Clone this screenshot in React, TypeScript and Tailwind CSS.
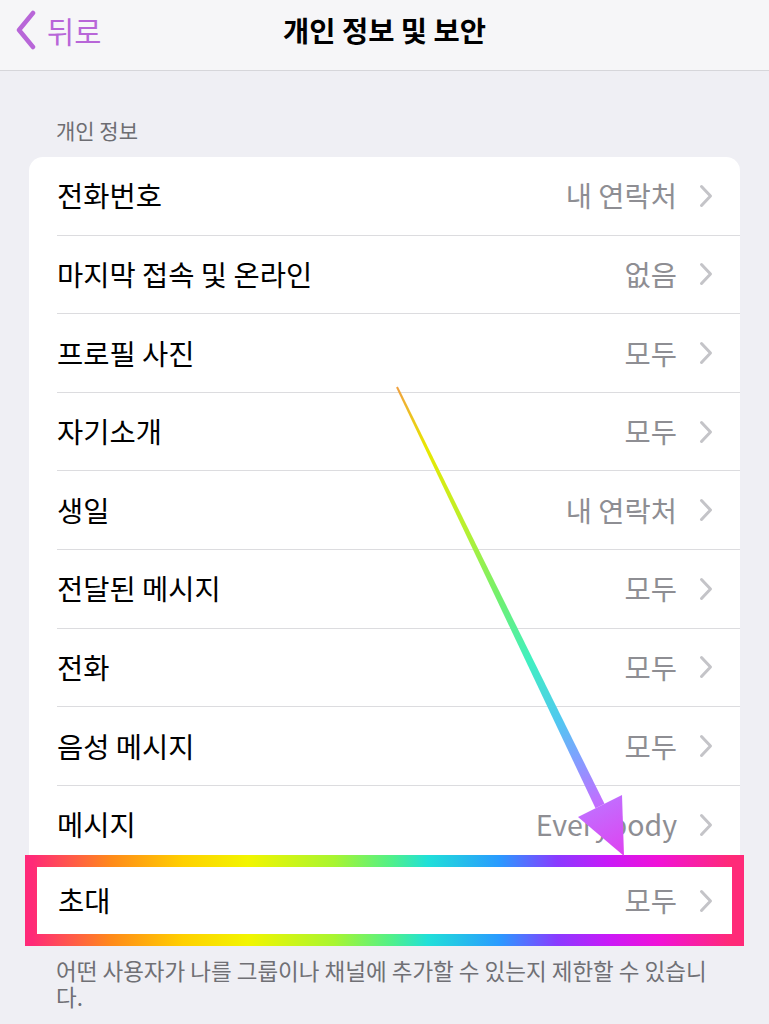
import React from 'react';

const ROWS: { label: string; value: string }[] = [
  { label: '전화번호', value: '내 연락처' },
  { label: '마지막 접속 및 온라인', value: '없음' },
  { label: '프로필 사진', value: '모두' },
  { label: '자기소개', value: '모두' },
  { label: '생일', value: '내 연락처' },
  { label: '전달된 메시지', value: '모두' },
  { label: '전화', value: '모두' },
  { label: '음성 메시지', value: '모두' },
  { label: '메시지', value: 'Everybody' },
];

const Chevron = () => (
  <svg width="14" height="24" viewBox="0 0 14 24" className="shrink-0">
    <path d="M2.5 2.5 L11.5 12 L2.5 21.5" fill="none" stroke="#c4c4c8" strokeWidth="3" strokeLinecap="round" strokeLinejoin="round" />
  </svg>
);

const Row = ({ label, value }: { label: string; value: string }) => (
  <div className="flex h-[78.6px] pl-[28px]">
    <div className="flex flex-1 items-center border-b border-[#dcdcdf] pr-[27px]">
      <span className="flex-1 text-[28.5px] text-black">{label}</span>
      <span className="mr-[22px] text-[28.5px] text-[#8e8e93]">{value}</span>
      <Chevron />
    </div>
  </div>
);

export default function App() {
  return (
    <div className="relative h-[1024px] w-full overflow-hidden bg-[#efeff4] font-['Noto_Sans_CJK_KR','Noto_Sans',sans-serif]">
      {/* nav bar */}
      <div className="h-[71px] border-b border-[#d6d6da] bg-[#f6f6f8]">
        <div className="grid h-[60px] grid-cols-[1fr_auto_1fr] items-center">
          <div className="flex items-center gap-[10px] pl-[13px] text-[#b866d8]">
            <svg width="24" height="40" viewBox="0 0 24 40">
              <path d="M20 3 L6 20 L20 37" fill="none" stroke="#b866d8" strokeWidth="4.5" strokeLinecap="round" strokeLinejoin="round" />
            </svg>
            <span className="text-[29.5px]">뒤로</span>
          </div>
          <h1 className="text-[28.5px] font-bold text-black">개인 정보 및 보안</h1>
          <div />
        </div>
      </div>

      <div className="pl-[56px] pt-[47px] text-[21px] leading-[24px] text-[#6d6d72]">개인 정보</div>

      <div className="mx-[29px] mt-[15px] rounded-[14px] bg-white">
        {ROWS.map((r) => (
          <Row key={r.label} label={r.label} value={r.value} />
        ))}
        {/* highlighted last row */}
        <div className="relative -mx-[4px] -mb-[3px] -mt-[9px] bg-[linear-gradient(90deg,#ff2a78_1%,#ff8a1a_12%,#ffd000_22%,#f2f500_31%,#a8f530_43%,#50f08a_51%,#20e0d8_56%,#2a9aff_66%,#8a3aff_74%,#c81af8_81%,#f012d8_88%,#ff2a78_98%)] p-[12px]">
          <div className="flex h-[67px] items-center bg-white pl-[21px] pr-[19px]">
            <span className="flex-1 text-[28.5px] text-black">초대</span>
            <span className="mr-[22px] text-[28.5px] text-[#8e8e93]">모두</span>
            <Chevron />
          </div>
        </div>
      </div>

      <div className="mt-[14px] pl-[56px] text-[22.5px] leading-[26px] text-[#707075]">
        <div className="whitespace-nowrap">어떤 사용자가 나를 그룹이나 채널에 추가할 수 있는지 제한할 수 있습니</div>
        <div>다.</div>
      </div>

      {/* annotation arrow */}
      <svg className="pointer-events-none absolute left-0 top-0" width="769" height="1024" viewBox="0 0 769 1024">
        <defs>
          <linearGradient id="arrowGrad" gradientUnits="userSpaceOnUse" x1="397" y1="387" x2="625" y2="857">
            <stop offset="0" stopColor="#f0a040" />
            <stop offset="0.13" stopColor="#e8e800" />
            <stop offset="0.3" stopColor="#b8f030" />
            <stop offset="0.45" stopColor="#70f070" />
            <stop offset="0.58" stopColor="#40f0c0" />
            <stop offset="0.71" stopColor="#50c8f0" />
            <stop offset="0.79" stopColor="#80a0ff" />
            <stop offset="0.88" stopColor="#c070ff" />
            <stop offset="1" stopColor="#e040f0" />
          </linearGradient>
        </defs>
        <polygon points="397.9,386.6 604.5,803.8 595.5,808.2 396.1,387.4" fill="url(#arrowGrad)" />
        <polygon points="622,795 624,856 578,817" fill="url(#arrowGrad)" />
      </svg>
    </div>
  );
}
